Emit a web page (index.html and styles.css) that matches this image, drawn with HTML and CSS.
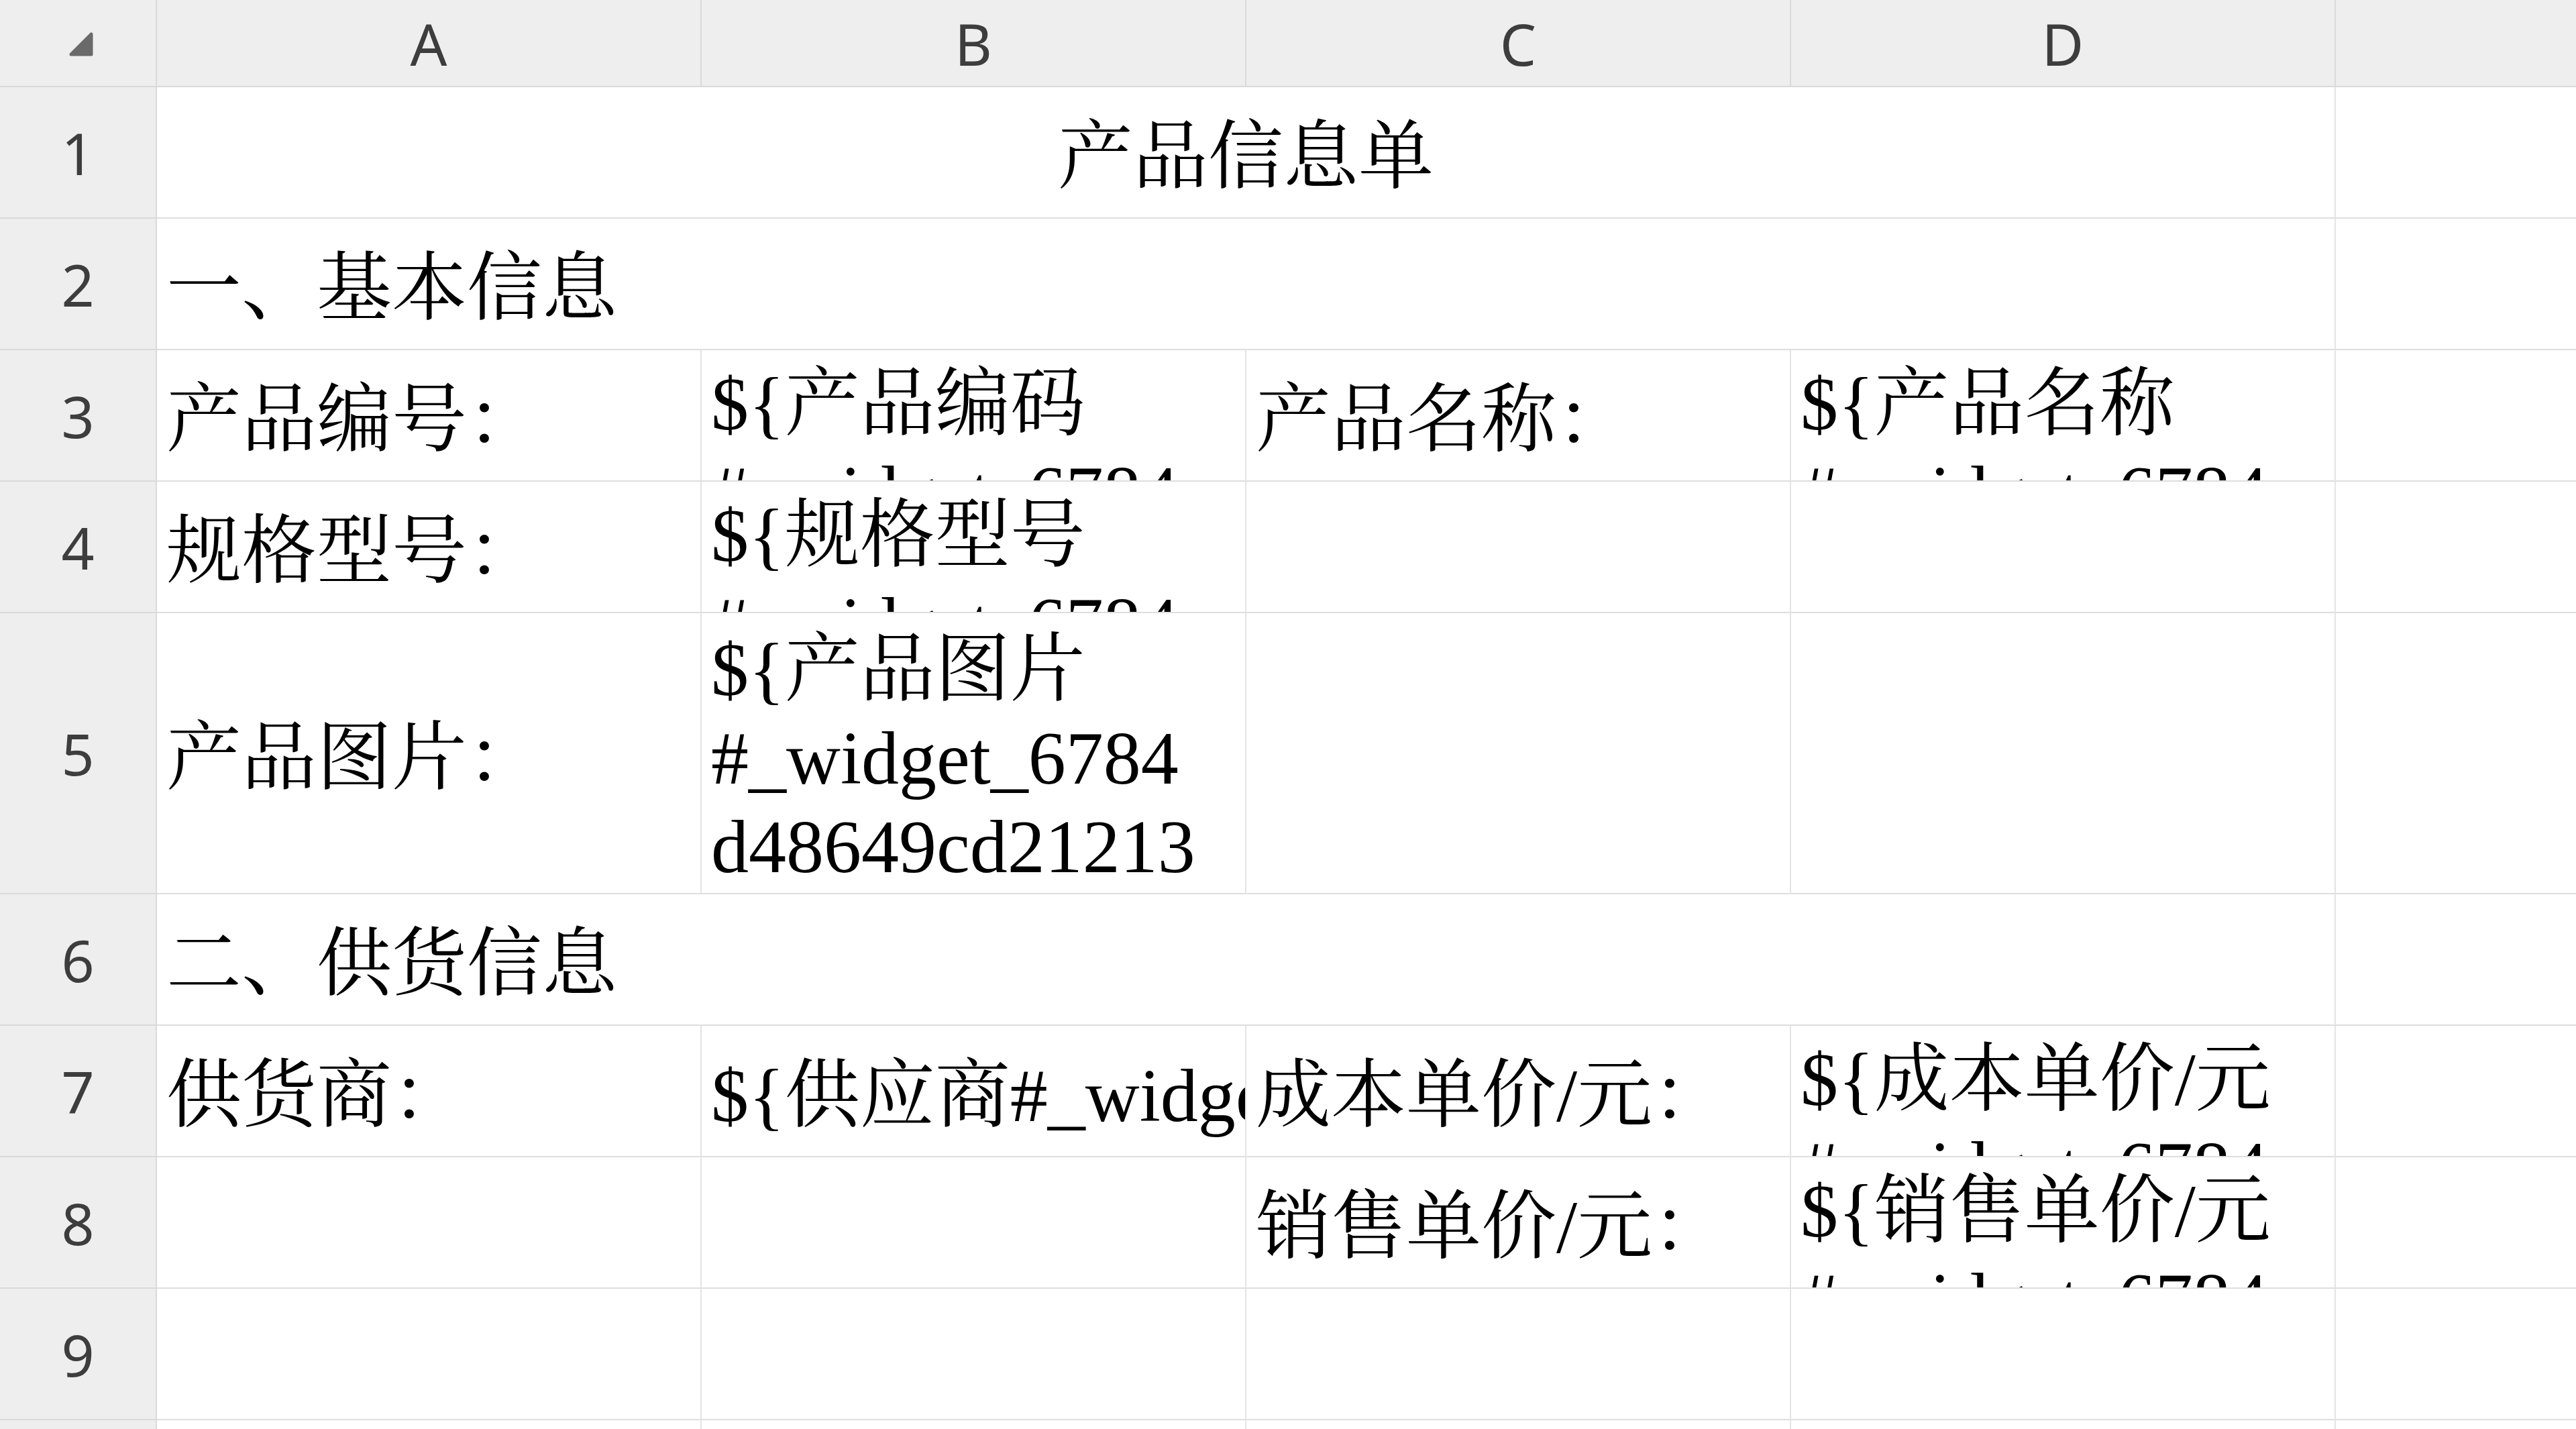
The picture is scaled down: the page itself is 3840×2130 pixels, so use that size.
FILE: index.html
```html
<!DOCTYPE html>
<html lang="zh-CN">
<head>
<meta charset="utf-8">
<title>产品信息单</title>
<link rel="stylesheet" href="styles.css">
</head>
<body>
<div class="sheet">
  <div class="hd corner"><svg class="tri" width="36" height="36" viewBox="0 0 36 36"><polygon points="33,3 33,33 3,33" fill="#6a6a6a" stroke="#6a6a6a" stroke-width="5" stroke-linejoin="round"/></svg></div>
  <div class="hd">A</div>
  <div class="hd">B</div>
  <div class="hd">C</div>
  <div class="hd">D</div>
  <div class="hd"></div>

  <div class="hd rh">1</div>
  <div class="c title">产品信息单</div>
  <div class="c"></div>

  <div class="hd rh">2</div>
  <div class="c span4">一、基本信息</div>
  <div class="c"></div>

  <div class="hd rh">3</div>
  <div class="c">产品编号：</div>
  <div class="c"><span class="ln">${产品编码</span><span class="ln">#_widget_6784</span></div>
  <div class="c">产品名称：</div>
  <div class="c"><span class="ln">${产品名称</span><span class="ln">#_widget_6784</span></div>
  <div class="c"></div>

  <div class="hd rh">4</div>
  <div class="c">规格型号：</div>
  <div class="c"><span class="ln">${规格型号</span><span class="ln">#_widget_6784</span></div>
  <div class="c"></div>
  <div class="c"></div>
  <div class="c"></div>

  <div class="hd rh">5</div>
  <div class="c">产品图片：</div>
  <div class="c"><span class="ln">${产品图片</span><span class="ln">#_widget_6784</span><span class="ln">d48649cd21213</span></div>
  <div class="c"></div>
  <div class="c"></div>
  <div class="c"></div>

  <div class="hd rh">6</div>
  <div class="c span4">二、供货信息</div>
  <div class="c"></div>

  <div class="hd rh">7</div>
  <div class="c">供货商：</div>
  <div class="c">${供应商#_widget_6784d48649cd21213}</div>
  <div class="c">成本单价/元：</div>
  <div class="c"><span class="ln">${成本单价/元</span><span class="ln">#_widget_6784</span></div>
  <div class="c"></div>

  <div class="hd rh">8</div>
  <div class="c"></div>
  <div class="c"></div>
  <div class="c">销售单价/元：</div>
  <div class="c"><span class="ln">${销售单价/元</span><span class="ln">#_widget_6784</span></div>
  <div class="c"></div>

  <div class="hd rh">9</div>
  <div class="c"></div>
  <div class="c"></div>
  <div class="c"></div>
  <div class="c"></div>
  <div class="c"></div>

  <div class="hd rh"></div>
  <div class="c"></div>
  <div class="c"></div>
  <div class="c"></div>
  <div class="c"></div>
  <div class="c"></div>
</div>
</body>
</html>
```

FILE: styles.css
```css
html, body {
  margin: 0;
  padding: 0;
  background: #ffffff;
}
body {
  width: 3840px;
  height: 2130px;
  overflow: hidden;
}
.sheet {
  display: grid;
  grid-template-columns: 234px repeat(5, 812px);
  grid-template-rows: 130px repeat(4, 196px) 419px repeat(5, 196px);
  width: max-content;
}
.c {
  box-sizing: border-box;
  border-right: 2px solid #e4e4e4;
  border-bottom: 2px solid #dedede;
  overflow: hidden;
  display: flex;
  flex-direction: column;
  justify-content: safe center;
  padding: 14px 14px 0 14px;
  font-family: "Liberation Serif", "Noto Serif CJK SC", "Noto Sans CJK SC", serif;
  font-size: 112px;
  line-height: 132px;
  color: #000000;
  white-space: nowrap;
  min-width: 0;
  min-height: 0;
}
.ln {
  display: block;
}
.title {
  grid-column: span 4;
  align-items: center;
}
.span4 {
  grid-column: span 4;
}
.hd {
  box-sizing: border-box;
  background: #eeeeee;
  border-right: 2px solid #dadada;
  border-bottom: 2px solid #d9d9d9;
  display: flex;
  align-items: center;
  justify-content: center;
  font-family: "Noto Sans", "Open Sans", sans-serif;
  font-size: 86px;
  color: #3d3d3d;
  overflow: hidden;
  min-width: 0;
}
.rh {
  padding-top: 0;
}
.corner {
  padding: 4px 0 0 10px;
}
.tri {
  display: block;
}
```
